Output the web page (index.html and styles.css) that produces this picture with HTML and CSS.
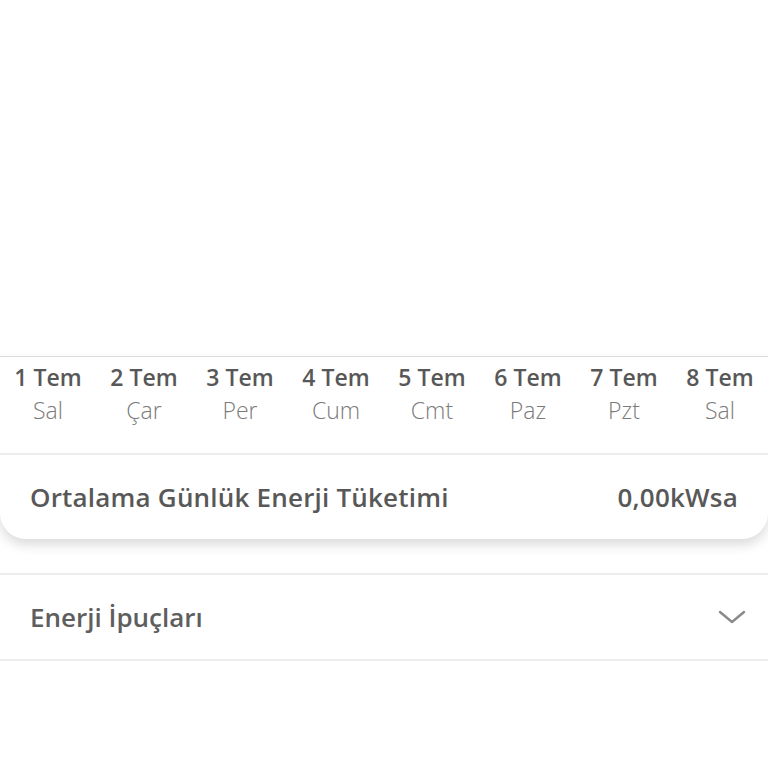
FILE: index.html
```html
<!DOCTYPE html>
<html lang="tr">
<head>
  <meta charset="utf-8">
  <title>Enerji</title>
  <link rel="stylesheet" href="styles.css">
</head>
<body>
  <div class="chart-area"></div>

  <div class="usage-card">
    <div class="days">
      <div class="day"><span class="date">1 Tem</span><span class="weekday">Sal</span></div>
      <div class="day"><span class="date">2 Tem</span><span class="weekday">Çar</span></div>
      <div class="day"><span class="date">3 Tem</span><span class="weekday">Per</span></div>
      <div class="day"><span class="date">4 Tem</span><span class="weekday">Cum</span></div>
      <div class="day"><span class="date">5 Tem</span><span class="weekday">Cmt</span></div>
      <div class="day"><span class="date">6 Tem</span><span class="weekday">Paz</span></div>
      <div class="day"><span class="date">7 Tem</span><span class="weekday">Pzt</span></div>
      <div class="day"><span class="date">8 Tem</span><span class="weekday">Sal</span></div>
    </div>
    <div class="summary">
      <span>Ortalama Günlük Enerji Tüketimi</span>
      <span>0,00kWsa</span>
    </div>
  </div>

  <div class="tips">
    <span>Enerji İpuçları</span>
    <svg class="chevron" width="28" height="16" viewBox="0 0 28 16">
      <path d="M2 3 L14 13 L26 3" fill="none" stroke="#8a8a8a" stroke-width="2.4" stroke-linecap="round" stroke-linejoin="round"/>
    </svg>
  </div>
</body>
</html>
```

FILE: styles.css
```css
body {
  margin: 0;
  background: #fff;
  font-family: "Open Sans", "Noto Sans", sans-serif;
  color: #585858;
}

.chart-area {
  height: 356px;
}

.usage-card {
  border-top: 1px solid #dcdcdc;
  border-radius: 0 0 26px 26px;
  background: #fff;
  box-shadow: 0 6px 12px rgba(0, 0, 0, 0.14);
}

.days {
  display: grid;
  grid-template-columns: repeat(8, 1fr);
  height: 96px;
  border-bottom: 2px solid #ececec;
}

.day {
  display: flex;
  flex-direction: column;
  align-items: center;
  padding-top: 4px;
}

.date {
  font-size: 23px;
  font-weight: 600;
  line-height: 32px;
}

.weekday {
  font-size: 23px;
  font-weight: 300;
  color: #7a7a7a;
  line-height: 34px;
}

.summary {
  display: flex;
  justify-content: space-between;
  align-items: center;
  height: 84px;
  padding: 0 30px;
  font-size: 26px;
  font-weight: 600;
  letter-spacing: 0.2px;
}

.tips {
  display: flex;
  justify-content: space-between;
  align-items: center;
  margin-top: 34px;
  height: 84px;
  padding: 0 22px 0 30px;
  border-top: 2px solid #ececec;
  border-bottom: 2px solid #ececec;
  font-size: 26px;
  font-weight: 600;
  color: #5e5e5e;
}
```
